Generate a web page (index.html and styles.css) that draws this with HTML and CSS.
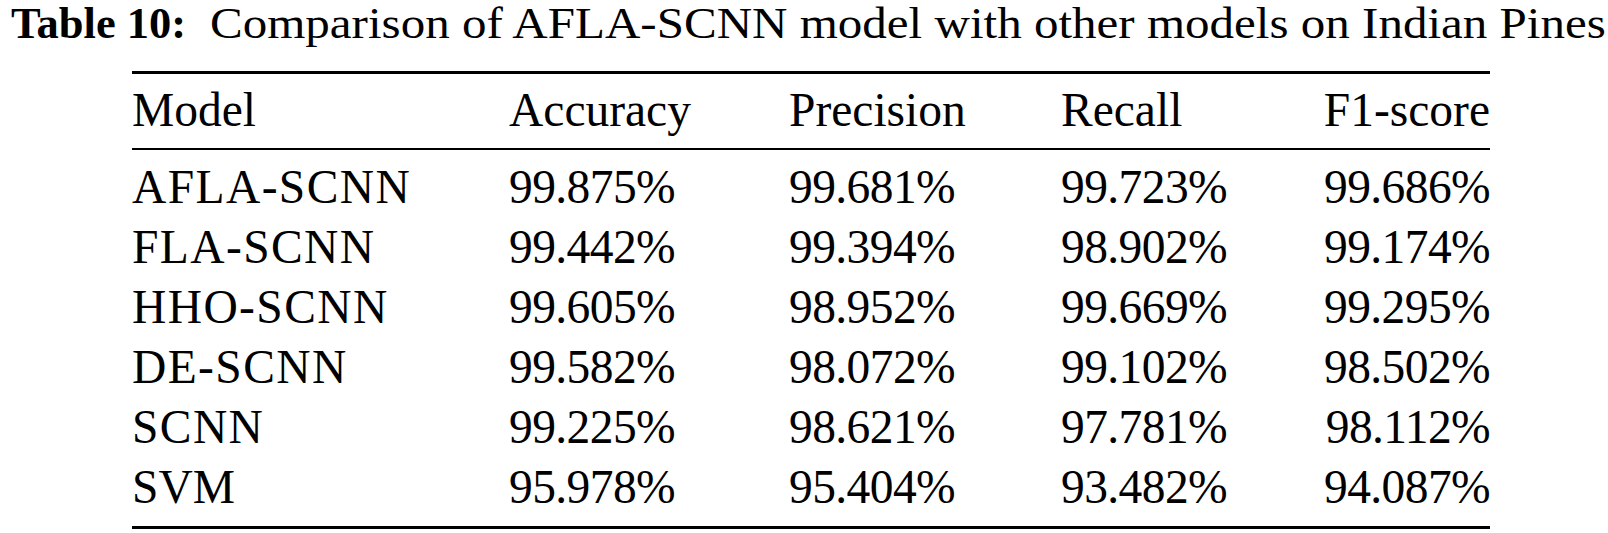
FILE: index.html
```html
<!DOCTYPE html>
<html lang="en">
<head>
<meta charset="utf-8">
<title>Table 10</title>
<link rel="stylesheet" href="styles.css">
</head>
<body>
<div class="caption"><span class="label">Table 10:</span><span class="caption-text">Comparison of AFLA-SCNN model with other models on Indian Pines</span></div>
<div class="table">
  <div class="thead row-grid">
    <div>Model</div><div>Accuracy</div><div>Precision</div><div>Recall</div><div class="last">F1-score</div>
  </div>
  <div class="tbody row-grid">
    <div class="name">AFLA-SCNN</div><div class="num">99.875%</div><div class="num">99.681%</div><div class="num">99.723%</div><div class="num last">99.686%</div>
    <div class="name">FLA-SCNN</div><div class="num">99.442%</div><div class="num">99.394%</div><div class="num">98.902%</div><div class="num last">99.174%</div>
    <div class="name">HHO-SCNN</div><div class="num">99.605%</div><div class="num">98.952%</div><div class="num">99.669%</div><div class="num last">99.295%</div>
    <div class="name">DE-SCNN</div><div class="num">99.582%</div><div class="num">98.072%</div><div class="num">99.102%</div><div class="num last">98.502%</div>
    <div class="name">SCNN</div><div class="num">99.225%</div><div class="num">98.621%</div><div class="num">97.781%</div><div class="num last">98.112%</div>
    <div class="name svm">SVM</div><div class="num">95.978%</div><div class="num">95.404%</div><div class="num">93.482%</div><div class="num last">94.087%</div>
  </div>
</div>
</body>
</html>
```

FILE: styles.css
```css
html, body {
  margin: 0;
  padding: 0;
  background: #fff;
}
body {
  font-family: "Liberation Serif", "Times New Roman", serif;
  color: #000;
  width: 1608px;
  height: 533px;
  overflow: hidden;
}
.caption {
  font-size: 44.5px;
  line-height: 46px;
  height: 46px;
  padding-left: 11px;
  white-space: nowrap;
}
.caption .label {
  font-weight: bold;
}
.caption-text {
  display: inline-block;
  margin-left: 24px;
  transform: scaleX(1.1017);
  transform-origin: 0 50%;
}
.table {
  margin-left: 132px;
  margin-top: 25px;
  width: 1358px;
  font-size: 47.5px;
  line-height: 60px;
}
.row-grid {
  display: grid;
  grid-template-columns: 377px 280px 272px 262px 167px;
  white-space: nowrap;
}
.thead {
  border-top: 3px solid #000;
  border-bottom: 2px solid #000;
  padding: 6px 0 8px;
}
.tbody {
  padding: 7px 0 9px;
  border-bottom: 3px solid #000;
}
.name {
  letter-spacing: 1.4px;
}
.name.svm {
  letter-spacing: 0;
}
.num {
  letter-spacing: -0.6px;
}
.last {
  text-align: right;
}
```
